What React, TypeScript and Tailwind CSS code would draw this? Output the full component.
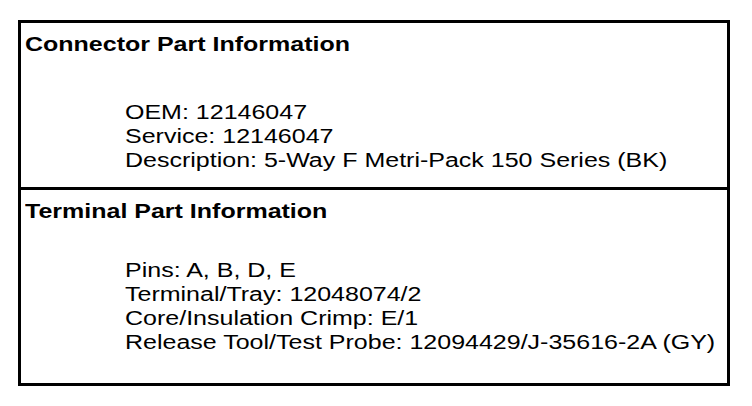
export default function App() {
  const sections = [
    {
      title: 'Connector Part Information',
      lines: ['OEM: 12146047', 'Service: 12146047', 'Description: 5-Way F Metri-Pack 150 Series (BK)'],
      head: 'pt-[9px]',
      body: 'pt-[44px] pb-[15px]',
    },
    {
      title: 'Terminal Part Information',
      lines: [
        'Pins: A, B, D, E',
        'Terminal/Tray: 12048074/2',
        'Core/Insulation Crimp: E/1',
        'Release Tool/Test Probe: 12094429/J-35616-2A (GY)',
      ],
      head: 'pt-[9px] border-t-[3px] border-black',
      body: 'pt-[35px] pb-[29px]',
    },
  ];

  // the source art is stretched sideways: 20px tall glyphs at 25px widths
  const stretch = 'w-max origin-left scale-x-[1.25] whitespace-nowrap text-[20px] leading-[24px]';

  return (
    <div className="w-[752px] h-[406px] bg-white pt-[20px] pl-[18px] font-['Liberation_Sans',Arial,sans-serif] text-black">
      <div className="w-[712px] border-[3px] border-black">
        {sections.map(s => (
          <div key={s.title}>
            <div className={`${s.head} pl-[4px]`}>
              <div className={`${stretch} font-bold`}>{s.title}</div>
            </div>
            <div className={`${s.body} pl-[104px]`}>
              {s.lines.map(l => (
                <div key={l} className={stretch}>{l}</div>
              ))}
            </div>
          </div>
        ))}
      </div>
    </div>
  );
}
